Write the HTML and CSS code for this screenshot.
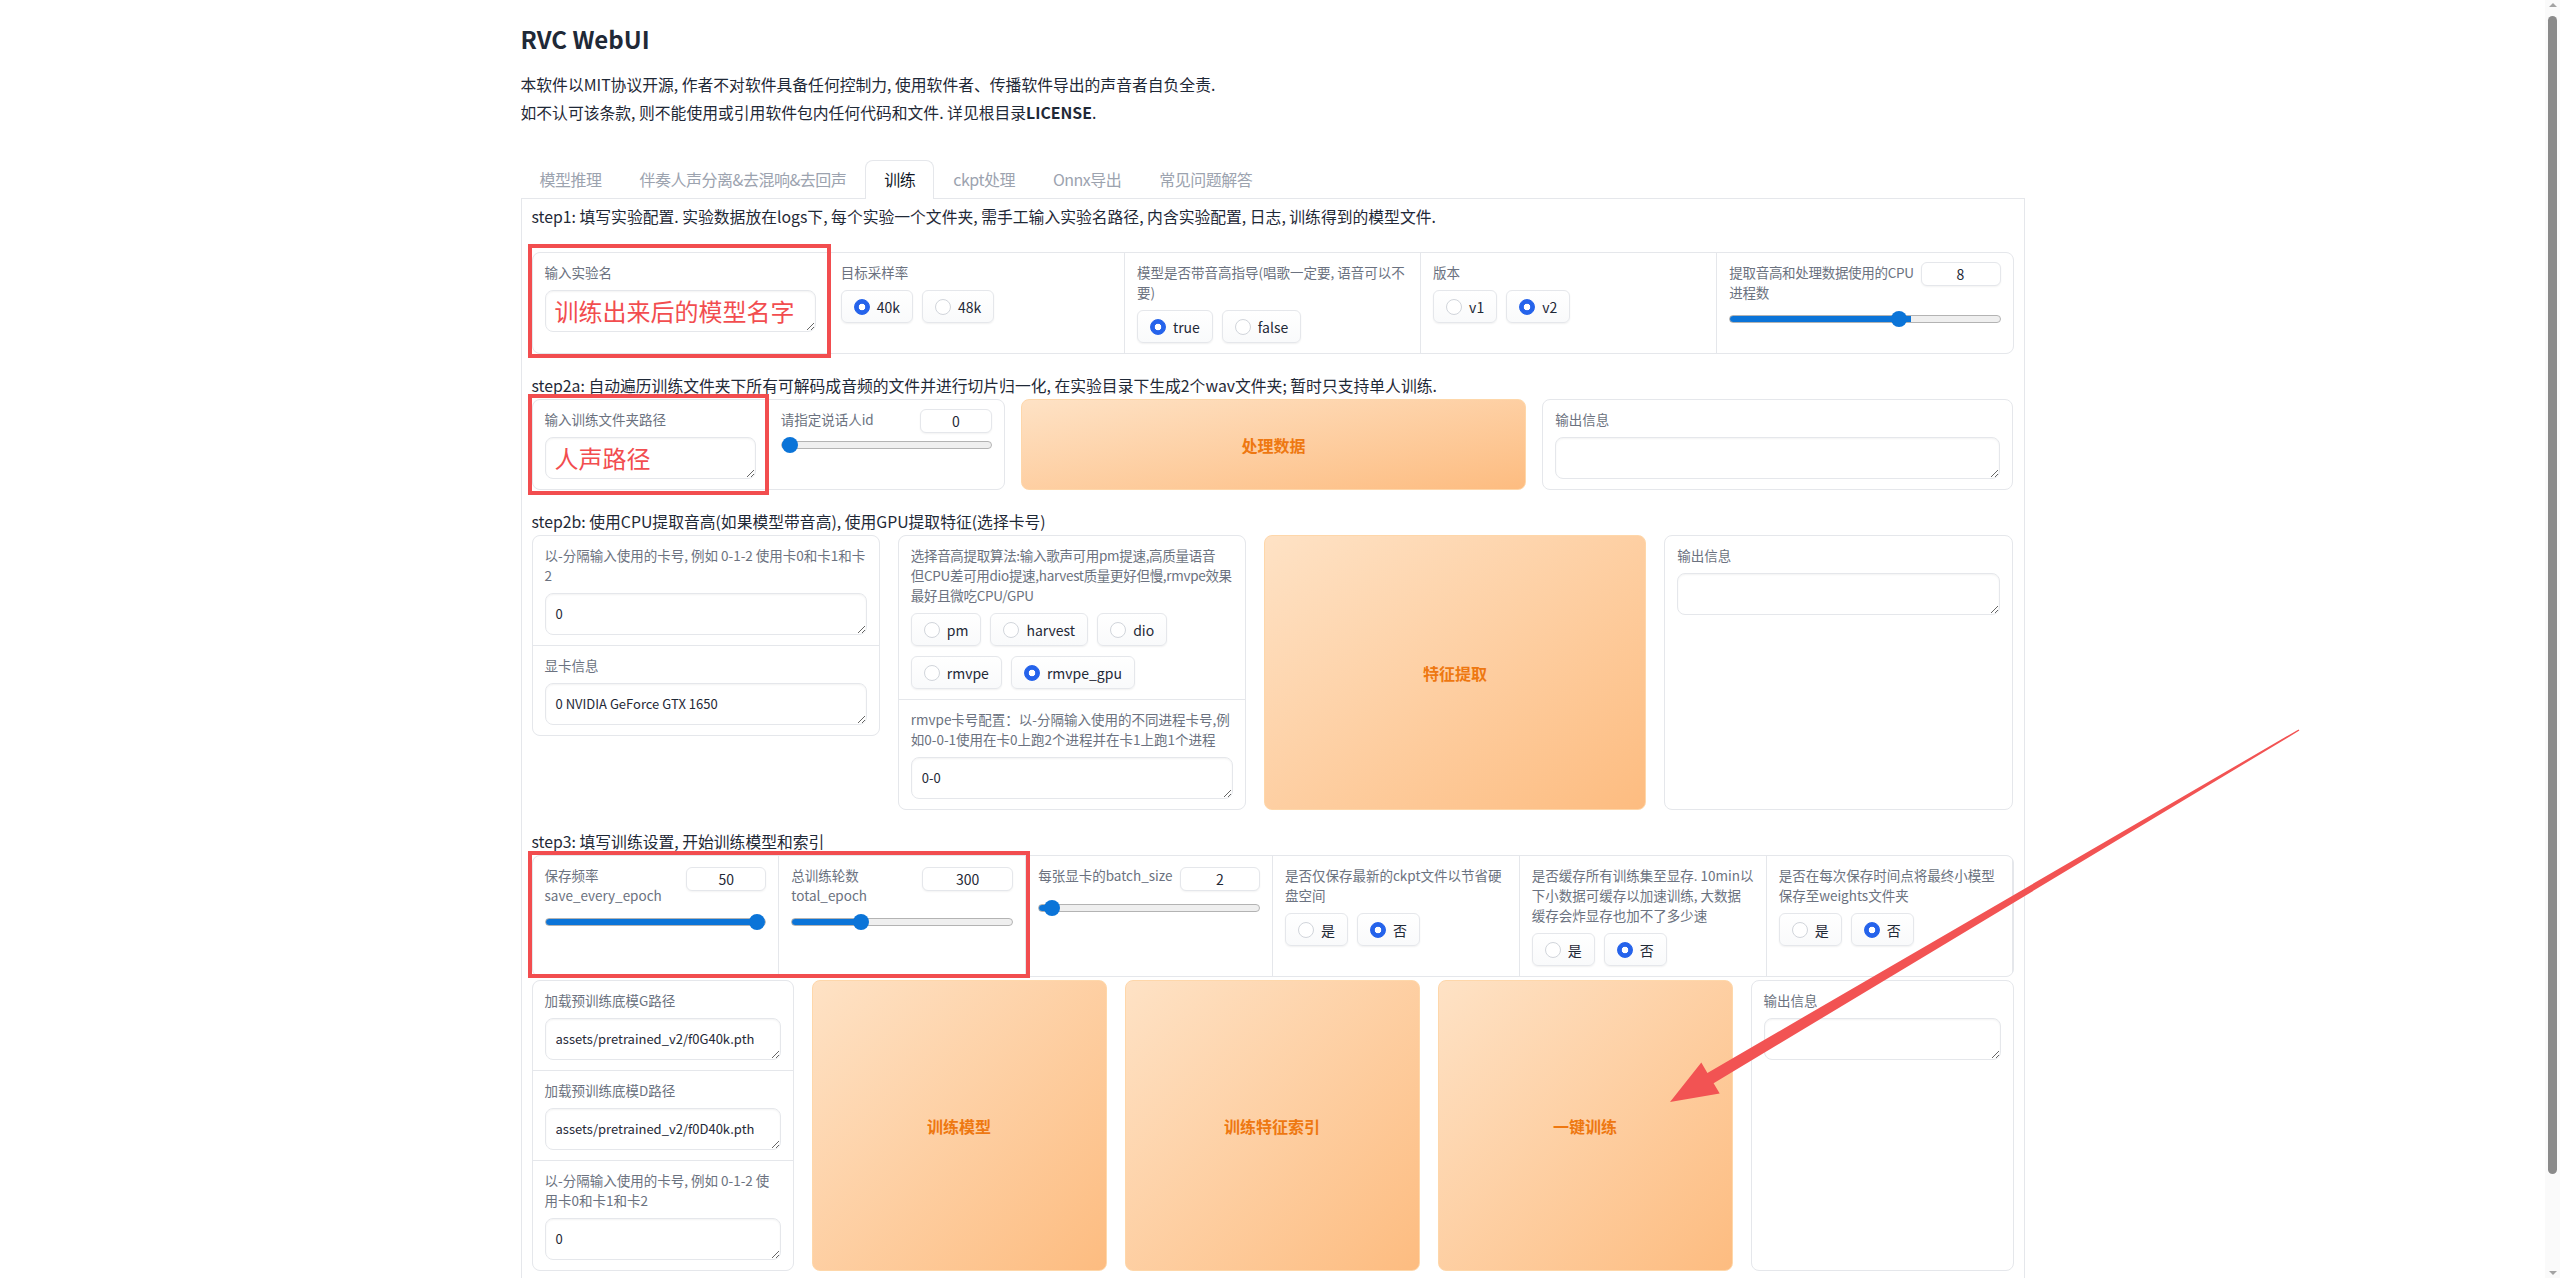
FILE: index.html
```html
<!DOCTYPE html>
<html lang="zh">
<head>
<meta charset="utf-8">
<title>RVC WebUI</title>
<link rel="stylesheet" href="styles.css">
</head>
<body>
<div class="app">
  <h1 class="title">RVC WebUI</h1>
  <div class="desc">
    <p>本软件以MIT协议开源, 作者不对软件具备任何控制力, 使用软件者、传播软件导出的声音者自负全责.</p>
    <p>如不认可该条款, 则不能使用或引用软件包内任何代码和文件. 详见根目录<b>LICENSE</b>.</p>
  </div>

  <div class="tabs">
    <div class="tab-nav">
      <div class="tab">模型推理</div>
      <div class="tab">伴奏人声分离&amp;去混响&amp;去回声</div>
      <div class="tab active">训练</div>
      <div class="tab">ckpt处理</div>
      <div class="tab">Onnx导出</div>
      <div class="tab">常见问题解答</div>
    </div>

    <div class="tab-panel">
      <div class="md first">step1: 填写实验配置. 实验数据放在logs下, 每个实验一个文件夹, 需手工输入实验名路径, 内含实验配置, 日志, 训练得到的模型文件.</div>

      <div class="hl-wrap">
        <div class="group cols5">
          <div class="block">
            <div class="label">输入实验名</div>
            <textarea class="ta ta-red" rows="1">训练出来后的模型名字</textarea>
          </div>
          <div class="block">
            <div class="label">目标采样率</div>
            <div class="radios">
              <label class="radio"><span class="dot on"></span>40k</label>
              <label class="radio"><span class="dot"></span>48k</label>
            </div>
          </div>
          <div class="block">
            <div class="label">模型是否带音高指导(唱歌一定要, 语音可以不要)</div>
            <div class="radios">
              <label class="radio"><span class="dot on"></span>true</label>
              <label class="radio"><span class="dot"></span>false</label>
            </div>
          </div>
          <div class="block">
            <div class="label">版本</div>
            <div class="radios">
              <label class="radio"><span class="dot"></span>v1</label>
              <label class="radio"><span class="dot on"></span>v2</label>
            </div>
          </div>
          <div class="block">
            <div class="shead">
              <div class="label flat tight">提取音高和处理数据使用的CPU进程数</div>
              <input class="num" type="number" value="8">
            </div>
            <input class="range" type="range" min="1" max="12" value="8" style="--p:67%">
          </div>
        </div>
        <div class="hl hl-step1"></div>
      </div>

      <div class="md">step2a: 自动遍历训练文件夹下所有可解码成音频的文件并进行切片归一化, 在实验目录下生成2个wav文件夹; 暂时只支持单人训练.</div>

      <div class="row row2a">
        <div class="hl-wrap">
          <div class="group cols2">
            <div class="block">
              <div class="label">输入训练文件夹路径</div>
              <textarea class="ta ta-red" rows="1">人声路径</textarea>
            </div>
            <div class="block">
              <div class="shead">
                <div class="label flat">请指定说话人id</div>
                <input class="num num-s" type="number" value="0">
              </div>
              <input class="range range-top" type="range" min="0" max="4" value="0" style="--p:3%">
            </div>
          </div>
          <div class="hl hl-step2a"></div>
        </div>
        <button class="btn">处理数据</button>
        <div class="block card">
          <div class="label">输出信息</div>
          <textarea class="ta" rows="1"></textarea>
        </div>
      </div>

      <div class="md">step2b: 使用CPU提取音高(如果模型带音高), 使用GPU提取特征(选择卡号)</div>

      <div class="row row2b">
        <div class="group stack top">
          <div class="block">
            <div class="label">以-分隔输入使用的卡号, 例如 0-1-2 使用卡0和卡1和卡2</div>
            <textarea class="ta" rows="1">0</textarea>
          </div>
          <div class="block">
            <div class="label">显卡信息</div>
            <textarea class="ta" rows="1">0 NVIDIA GeForce GTX 1650</textarea>
          </div>
        </div>
        <div class="group stack">
          <div class="block">
            <div class="label tight">选择音高提取算法:输入歌声可用pm提速,高质量语音<br>但CPU差可用dio提速,harvest质量更好但慢,rmvpe效果最好且微吃CPU/GPU</div>
            <div class="radios">
              <label class="radio"><span class="dot"></span>pm</label>
              <label class="radio"><span class="dot"></span>harvest</label>
              <label class="radio"><span class="dot"></span>dio</label>
              <label class="radio"><span class="dot"></span>rmvpe</label>
              <label class="radio"><span class="dot on"></span>rmvpe_gpu</label>
            </div>
          </div>
          <div class="block grow">
            <div class="label">rmvpe卡号配置：以-分隔输入使用的不同进程卡号,例如0-0-1使用在卡0上跑2个进程并在卡1上跑1个进程</div>
            <textarea class="ta" rows="1">0-0</textarea>
          </div>
        </div>
        <button class="btn">特征提取</button>
        <div class="block card">
          <div class="label">输出信息</div>
          <textarea class="ta" rows="1"></textarea>
        </div>
      </div>

      <div class="md">step3: 填写训练设置, 开始训练模型和索引</div>

      <div class="hl-wrap">
        <div class="group cols6">
          <div class="block">
            <div class="shead">
              <div>
                <div class="label flat">保存频率</div>
                <div class="info">save_every_epoch</div>
              </div>
              <input class="num num-t" type="number" value="50">
            </div>
            <input class="range" type="range" min="1" max="50" value="50" style="--p:97%">
          </div>
          <div class="block">
            <div class="shead">
              <div>
                <div class="label flat">总训练轮数</div>
                <div class="info">total_epoch</div>
              </div>
              <input class="num num-w num-t" type="number" value="300">
            </div>
            <input class="range" type="range" min="2" max="1000" value="300" style="--p:31%">
          </div>
          <div class="block">
            <div class="shead">
              <div class="label flat">每张显卡的batch_size</div>
              <input class="num num-t" type="number" value="2">
            </div>
            <input class="range" type="range" min="1" max="40" value="2" style="--p:5%">
          </div>
          <div class="block">
            <div class="label">是否仅保存最新的ckpt文件以节省硬盘空间</div>
            <div class="radios">
              <label class="radio"><span class="dot"></span>是</label>
              <label class="radio"><span class="dot on"></span>否</label>
            </div>
          </div>
          <div class="block">
            <div class="label">是否缓存所有训练集至显存. 10min以下小数据可缓存以加速训练, 大数据缓存会炸显存也加不了多少速</div>
            <div class="radios">
              <label class="radio"><span class="dot"></span>是</label>
              <label class="radio"><span class="dot on"></span>否</label>
            </div>
          </div>
          <div class="block">
            <div class="label">是否在每次保存时间点将最终小模型保存至weights文件夹</div>
            <div class="radios">
              <label class="radio"><span class="dot"></span>是</label>
              <label class="radio"><span class="dot on"></span>否</label>
            </div>
          </div>
        </div>
        <div class="hl hl-step3"></div>
      </div>

      <div class="row row3">
        <div class="group stack top">
          <div class="block">
            <div class="label">加载预训练底模G路径</div>
            <textarea class="ta" rows="1">assets/pretrained_v2/f0G40k.pth</textarea>
          </div>
          <div class="block">
            <div class="label">加载预训练底模D路径</div>
            <textarea class="ta" rows="1">assets/pretrained_v2/f0D40k.pth</textarea>
          </div>
          <div class="block">
            <div class="label">以-分隔输入使用的卡号, 例如 0-1-2 使用卡0和卡1和卡2</div>
            <textarea class="ta" rows="1">0</textarea>
          </div>
        </div>
        <button class="btn">训练模型</button>
        <button class="btn">训练特征索引</button>
        <button class="btn">一键训练</button>
        <div class="block card">
          <div class="label">输出信息</div>
          <textarea class="ta" rows="1"></textarea>
        </div>
      </div>
    </div>
  </div>

  <svg class="arrow" width="1800" height="1300" viewBox="0 0 1800 1300" aria-hidden="true">
    <polygon points="1149,1102 1180.3,1062.6 1186.4,1072.9 1777.6,729.4 1778.4,730.6 1192.6,1083.3 1198.7,1093.6" fill="#f25353"/>
  </svg>
</div>

<div class="scrollbar" aria-hidden="true">
  <span class="sb-up"></span>
  <span class="sb-thumb"></span>
  <span class="sb-down"></span>
</div>
</body>
</html>
```

FILE: styles.css
```css
* { box-sizing: border-box; }

html, body {
  margin: 0;
  padding: 0;
  background: #ffffff;
}

body {
  font-family: "Noto Sans CJK SC", "Noto Sans", sans-serif;
  color: #1f2937;
  font-size: 14px;
  padding-right: 15px;
}

.app {
  position: relative;
  width: 1504px;
  margin: 0 auto;
  padding: 23px 0 0;
}

.title {
  margin: 0;
  font-size: 24px;
  line-height: 32px;
  font-weight: 600;
  color: #1f2937;
}

.desc {
  margin-top: 16px;
}

.desc p {
  margin: 0;
  font-size: 15.8px;
  line-height: 28px;
}

.desc b {
  font-weight: 600;
}

/* tabs */
.tabs {
  margin-top: 33px;
}

.tab-nav {
  display: flex;
  height: 39px;
  border-bottom: 1px solid #e5e7eb;
}

.tab {
  padding: 0 18px;
  font-size: 16px;
  line-height: 37px;
  letter-spacing: -0.5px;
  color: #9ca3af;
  border: 1px solid transparent;
  border-bottom: none;
  border-radius: 8px 8px 0 0;
  white-space: nowrap;
}

.tab.active {
  color: #111827;
  background: #ffffff;
  border-color: #e5e7eb;
  height: 39px;
}

.tab-panel {
  display: flex;
  flex-direction: column;
  border: 1px solid #e5e7eb;
  border-top: none;
  border-radius: 0 0 8px 8px;
  padding: 0 10px 110px;
}

.md {
  font-size: 15.8px;
  line-height: 22px;
  margin: 21px 0 2px;
  color: #1f2937;
}

.md.first {
  margin: 7px 0 24px;
}

/* groups and blocks */
.hl-wrap {
  position: relative;
}

.group {
  display: grid;
  gap: 1px;
  background: #e5e7eb;
  border: 1px solid #e5e7eb;
  border-radius: 8px;
  overflow: hidden;
}

.cols5 { grid-template-columns: repeat(5, 1fr); }
.cols6 { grid-template-columns: repeat(6, 1fr); }
.cols2 { grid-template-columns: repeat(2, 1fr); }

.group.stack {
  display: flex;
  flex-direction: column;
}

.group.top {
  align-self: start;
}

.block {
  background: #ffffff;
  padding: 9px 12px 10px;
  min-width: 0;
}

.block.grow {
  flex: 1;
}

.card {
  border: 1px solid #e5e7eb;
  border-radius: 8px;
}

.label {
  font-size: 13.5px;
  line-height: 20px;
  color: #6b7280;
  margin-bottom: 8px;
}

.label.flat {
  margin-bottom: 0;
}

.label.tight {
  letter-spacing: -0.3px;
}

.info {
  font-size: 13.5px;
  line-height: 20px;
  color: #6b7280;
}

/* rows */
.row {
  display: grid;
  align-items: stretch;
}

.row2a {
  grid-template-columns: 473fr 505fr 471fr;
  gap: 16px;
}

.row2b {
  grid-template-columns: 348fr 348fr 382fr 349fr;
  gap: 18px;
}

.row3 {
  grid-template-columns: 262fr 295fr 295fr 295fr 263fr;
  gap: 18px;
  margin-top: 3px;
}

/* inputs */
.ta {
  display: block;
  width: 100%;
  height: 42px;
  padding: 10px 10px;
  border: 1px solid #e5e7eb;
  border-radius: 8px;
  background: #ffffff;
  box-shadow: inset 0 1px 2px rgba(0, 0, 0, 0.05);
  font-family: "Noto Sans CJK SC", "Noto Sans", sans-serif;
  font-size: 13px;
  line-height: 20px;
  color: #1f2937;
  resize: vertical;
  overflow: hidden;
  outline: none;
}

.ta-red {
  padding: 4px 9px;
  font-size: 24px;
  line-height: 32px;
  color: #f24d4f;
}

.radios {
  display: flex;
  flex-wrap: wrap;
  gap: 10px 9px;
}

.radio {
  display: flex;
  align-items: center;
  gap: 7px;
  height: 33px;
  padding: 0 12px;
  border: 1px solid #e5e7eb;
  border-radius: 6px;
  background: linear-gradient(to top, #f9fafb, #ffffff);
  box-shadow: 0 1px 2px rgba(0, 0, 0, 0.06);
  font-size: 14px;
  color: #1f2937;
}

.dot {
  flex: none;
  width: 16px;
  height: 16px;
  border-radius: 50%;
  border: 1px solid #d1d5db;
  background: #ffffff;
}

.dot.on {
  border-color: #2563eb;
  background: radial-gradient(circle, #ffffff 0 3px, #2563eb 3.6px);
}

.shead {
  display: flex;
  align-items: flex-start;
  justify-content: space-between;
  gap: 2px;
}

.num {
  flex: none;
  width: 80px;
  height: 24px;
  border: 1px solid #e5e7eb;
  border-radius: 6px;
  background: #ffffff;
  box-shadow: 0 1px 2px rgba(0, 0, 0, 0.05);
  text-align: center;
  font-family: "Noto Sans CJK SC", "Noto Sans", sans-serif;
  font-size: 14px;
  color: #1f2937;
  padding: 0 4px;
  outline: none;
  -moz-appearance: textfield;
}

.num::-webkit-inner-spin-button,
.num::-webkit-outer-spin-button {
  -webkit-appearance: none;
  margin: 0;
}

.num-s { width: 72px; }
.num-w { width: 91px; }
.num-t { margin-top: 2px; }

.range {
  -webkit-appearance: none;
  appearance: none;
  display: block;
  width: 100%;
  height: 16px;
  margin: 9px 0 0;
  background: transparent;
}

.range-top {
  margin-top: 4px;
}

.range::-webkit-slider-runnable-track {
  height: 8px;
  border-radius: 4px;
  border: 1px solid #b3b3b3;
  background: linear-gradient(to right, #0b74d8 var(--p), #efefef var(--p));
}

.range::-webkit-slider-thumb {
  -webkit-appearance: none;
  appearance: none;
  width: 16px;
  height: 16px;
  margin-top: -5px;
  border-radius: 50%;
  border: none;
  background: #0b74d8;
}

/* buttons */
.btn {
  display: flex;
  align-items: center;
  justify-content: center;
  border: 1px solid #fed7aa;
  border-radius: 8px;
  background: linear-gradient(to bottom right, #fee2c5, #fdbc80);
  color: #ee7811;
  font-family: "Noto Sans CJK SC", "Noto Sans", sans-serif;
  font-size: 16px;
  font-weight: 600;
  padding: 0;
}

/* annotations */
.hl {
  position: absolute;
  border: 4px solid #f24d4f;
  pointer-events: none;
}

.hl-step1 {
  left: -4px;
  top: -8px;
  bottom: -4px;
  width: calc(20% + 7px);
}

.hl-step2a {
  left: -4px;
  top: -5px;
  bottom: -5px;
  width: calc(50% + 5px);
}

.hl-step3 {
  left: -4px;
  top: -4px;
  bottom: -1px;
  width: calc(33.333% + 9px);
}

.arrow {
  position: absolute;
  left: 0;
  top: 0;
  pointer-events: none;
  overflow: visible;
}

/* browser scrollbar */
.scrollbar {
  position: fixed;
  top: 0;
  right: 0;
  width: 15px;
  height: 100vh;
  background: #fafafa;
  display: flex;
  flex-direction: column;
  align-items: center;
}

.sb-up,
.sb-down {
  width: 0;
  height: 0;
  border-left: 4px solid transparent;
  border-right: 4px solid transparent;
}

.sb-up {
  margin-top: 3px;
  border-bottom: 4px solid #a3a3a3;
}

.sb-thumb {
  width: 9px;
  height: 1158px;
  margin-top: 9px;
  border-radius: 5px;
  background: #8a8a8a;
}

.sb-down {
  margin-top: auto;
  margin-bottom: 3px;
  border-top: 4px solid #a3a3a3;
}
```
